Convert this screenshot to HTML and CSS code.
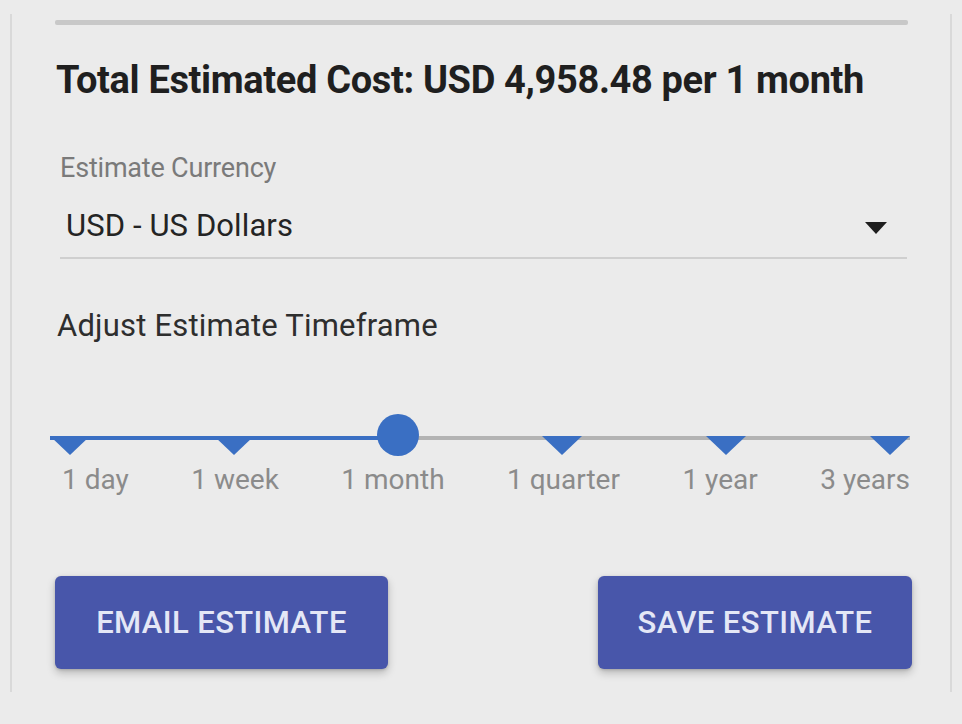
FILE: index.html
```html
<!DOCTYPE html>
<html lang="en">
<head>
<meta charset="utf-8">
<title>Estimate</title>
<link rel="stylesheet" href="styles.css">
</head>
<body>
<div class="card">
  <div class="divider"></div>
  <h2 class="total">Total Estimated Cost: USD 4,958.48 per 1 month</h2>
  <div class="field">
    <div class="field-label">Estimate Currency</div>
    <div class="select">
      <span class="select-value">USD - US Dollars</span>
      <svg class="caret" width="22" height="12" viewBox="0 0 22 12"><path d="M0 0H22L11 12Z" fill="#1e1e1e"/></svg>
    </div>
  </div>
  <div class="timeframe-title">Adjust Estimate Timeframe</div>
  <div class="slider">
    <div class="track">
      <div class="track-fill"></div>
      <div class="ticks">
        <span class="tick active"></span>
        <span class="tick active"></span>
        <span class="tick thumb-slot"><span class="thumb"></span></span>
        <span class="tick"></span>
        <span class="tick"></span>
        <span class="tick"></span>
      </div>
    </div>
    <div class="tick-labels">
      <span>1 day</span>
      <span>1 week</span>
      <span>1 month</span>
      <span>1 quarter</span>
      <span>1 year</span>
      <span>3 years</span>
    </div>
  </div>
  <div class="actions">
    <button class="btn btn-email">EMAIL ESTIMATE</button>
    <button class="btn btn-save">SAVE ESTIMATE</button>
  </div>
</div>
</body>
</html>
```
FILE: styles.css
```css
html, body {
  margin: 0;
  padding: 0;
  background: #ebebeb;
  font-family: Roboto, "Liberation Sans", Arial, sans-serif;
}

.card {
  margin: 14px 0 0 10px;
  width: 942px;
  height: 678px;
  box-sizing: border-box;
  border-left: 2px solid #d9d9d9;
  border-right: 2px solid #d9d9d9;
  padding: 6px 42px 0 43px;
}

.divider {
  height: 5px;
  background: #c8c8c8;
  border-radius: 2px;
  filter: blur(0.6px);
}

.total {
  margin: 33px 0 0 1px;
  font-size: 38px;
  line-height: 44px;
  font-weight: 700;
  color: #1f1f1f;
  letter-spacing: -0.35px;
}

.field {
  margin: 50px 0 0 5px;
  width: 847px;
}

.field-label {
  font-size: 27px;
  line-height: 32px;
  color: #7a7a7a;
  letter-spacing: -0.2px;
}

.select {
  display: flex;
  align-items: center;
  justify-content: space-between;
  height: 75px;
  box-sizing: border-box;
  border-bottom: 2px solid #cfcfcf;
  padding: 10px 20px 0 6px;
}

.select-value {
  font-size: 31px;
  line-height: 36px;
  color: #242424;
  letter-spacing: 0.1px;
}

.caret {
  display: block;
  margin-top: 4px;
}

.timeframe-title {
  margin: 49px 0 0 2px;
  font-size: 31px;
  line-height: 36px;
  color: #2e2e2e;
  letter-spacing: 0.2px;
}

.slider {
  margin: 92px 0 0 -5px;
  width: 860px;
}

.track {
  position: relative;
  height: 4px;
  background: #b3b3b3;
}

.track-fill {
  width: 350px;
  height: 4px;
  background: #3a6fc3;
}

.ticks {
  position: absolute;
  left: 0;
  right: 0;
  top: 0;
  display: flex;
  justify-content: space-between;
}

.tick {
  position: relative;
  width: 0;
  height: 0;
  border-left: 20px solid transparent;
  border-right: 20px solid transparent;
  border-top: 19px solid #3a6fc3;
}

.thumb-slot {
  border-top-color: transparent;
}

.thumb {
  position: absolute;
  left: -21px;
  top: -41px;
  width: 42px;
  height: 42px;
  border-radius: 50%;
  background: #3a6fc3;
}

.tick-labels {
  display: flex;
  justify-content: space-between;
  margin: 24px 0 0 12px;
  font-size: 28px;
  line-height: 32px;
  color: #8b8b8b;
}

.actions {
  display: flex;
  justify-content: space-between;
  margin: 80px 0 0 0;
  width: 857px;
}

.btn {
  height: 93px;
  border: none;
  border-radius: 6px;
  background: #4856aa;
  color: #e4e7f6;
  font-family: Roboto, "Liberation Sans", Arial, sans-serif;
  font-size: 31px;
  font-weight: 500;
  letter-spacing: 0.4px;
  box-shadow: 0 4px 8px rgba(0, 0, 0, 0.22), 0 1px 3px rgba(0, 0, 0, 0.15);
}

.btn-email {
  width: 333px;
}

.btn-save {
  width: 314px;
}
```
